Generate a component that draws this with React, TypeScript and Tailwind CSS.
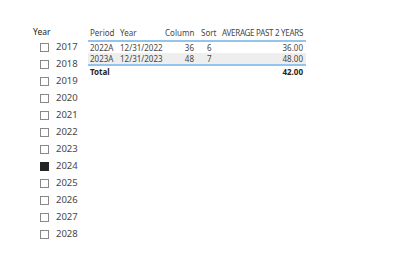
import React from "react";

const years = ["2017","2018","2019","2020","2021","2022","2023","2024","2025","2026","2027","2028"];

const cols = "grid grid-cols-[30px_47px_31px_22px_88px] items-center";

export default function App() {
  return (
    <div className="w-[400px] h-[269px] bg-white flex text-[#252423]" style={{ fontFamily: '"Noto Sans", "Open Sans", sans-serif' }}>
      <div className="pl-[33px] pt-[25px] w-[88px] shrink-0">
        <div className="h-[14px] flex items-center text-[8.5px] text-[#252423]">Year</div>
        <div className="flex flex-col">
          {years.map((y) => (
            <div key={y} className="h-[17px] flex items-center pl-[7px] gap-[7px]">
              {y === "2024" ? (
                <div className="w-[9px] h-[9px] bg-[#252423] border border-[#252423]" />
              ) : (
                <div className="w-[9px] h-[9px] border border-[#8a8886] bg-white" />
              )}
              <span className="text-[9.5px] text-[#484644]">{y}</span>
            </div>
          ))}
        </div>
      </div>
      <div className="pt-[25px] text-[8px] text-[#484644] whitespace-nowrap">
        <div className={`${cols} h-[17px] border-b-2 border-[#94c4ec]`}>
          <div className="pl-[2px]">Period</div>
          <div className="pl-[2px]">Year</div>
          <div className="text-right pr-[2px]">Column</div>
          <div className="pl-[5px]">Sort</div>
          <div className="text-right pr-[3px] tracking-[-0.3px]">AVERAGE PAST 2 YEARS</div>
        </div>
        <div className={`${cols} h-[11px]`}>
          <div className="pl-[2px]">2022A</div>
          <div className="pl-[2px]">12/31/2022</div>
          <div className="text-right pr-[2px]">36</div>
          <div className="pl-[11px]">6</div>
          <div className="text-right pr-[3px]">36.00</div>
        </div>
        <div className={`${cols} h-[11px] bg-[#eeeeee] border-b-2 border-[#94c4ec] box-content`}>
          <div className="pl-[2px]">2023A</div>
          <div className="pl-[2px]">12/31/2023</div>
          <div className="text-right pr-[2px]">48</div>
          <div className="pl-[11px]">7</div>
          <div className="text-right pr-[3px]">48.00</div>
        </div>
        <div className={`${cols} h-[11px] font-bold text-[#252423]`}>
          <div className="pl-[2px]">Total</div>
          <div></div>
          <div></div>
          <div></div>
          <div className="text-right pr-[3px]">42.00</div>
        </div>
      </div>
    </div>
  );
}
